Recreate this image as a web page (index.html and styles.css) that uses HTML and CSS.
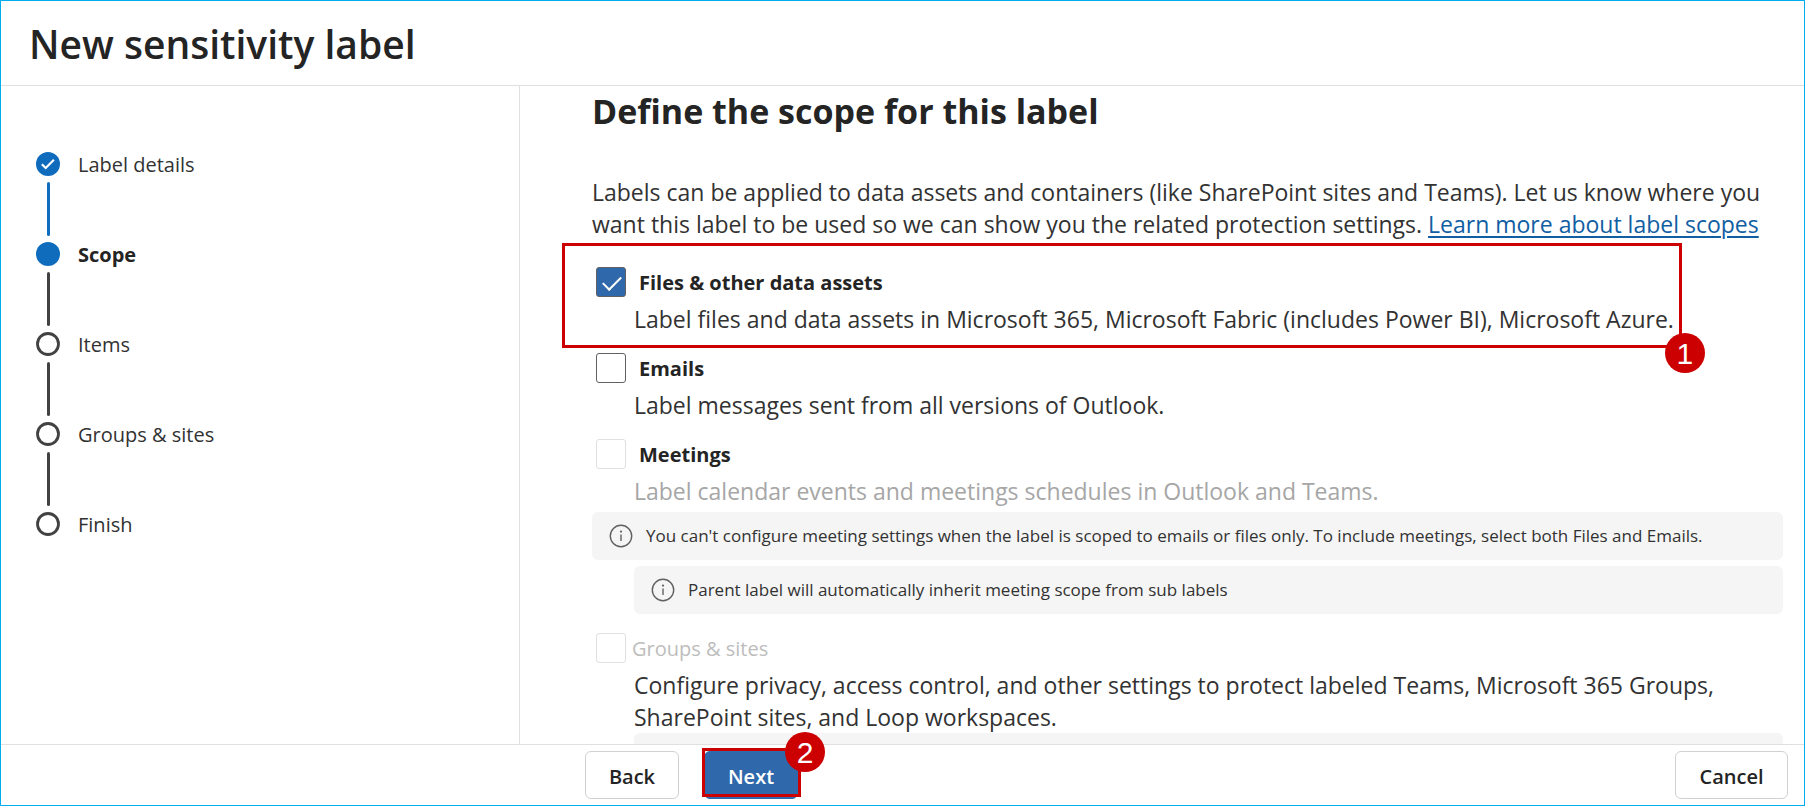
FILE: index.html
```html
<!DOCTYPE html>
<html lang="en">
<head>
<meta charset="utf-8">
<title>New sensitivity label</title>
<link rel="stylesheet" href="styles.css">
</head>
<body>
<div class="wizard">
  <header class="wizard-header">
    <h1 class="wizard-title">New sensitivity label</h1>
  </header>
  <div class="wizard-body">
    <nav class="sidebar" aria-label="Steps">
      <ol class="steps">
        <li class="step step-done">
          <svg class="step-icon" viewBox="0 0 24 24" aria-hidden="true"><circle cx="12" cy="12" r="12" fill="#0f6cbd"/><path d="M5.800 12.300l3.900 3.700 8.200-8.300" fill="none" stroke="#fff" stroke-width="2.200"/></svg>
          <span>Label details</span>
        </li>
        <li class="step step-current" aria-current="step">
          <svg class="step-icon" viewBox="0 0 24 24" aria-hidden="true"><circle cx="12" cy="12" r="12" fill="#0f6cbd"/></svg>
          <span>Scope</span>
        </li>
        <li class="step">
          <svg class="step-icon" viewBox="0 0 24 24" aria-hidden="true"><circle cx="12" cy="12" r="10.500" fill="none" stroke="#424242" stroke-width="2.800"/></svg>
          <span>Items</span>
        </li>
        <li class="step">
          <svg class="step-icon" viewBox="0 0 24 24" aria-hidden="true"><circle cx="12" cy="12" r="10.500" fill="none" stroke="#424242" stroke-width="2.800"/></svg>
          <span>Groups &amp; sites</span>
        </li>
        <li class="step">
          <svg class="step-icon" viewBox="0 0 24 24" aria-hidden="true"><circle cx="12" cy="12" r="10.500" fill="none" stroke="#424242" stroke-width="2.800"/></svg>
          <span>Finish</span>
        </li>
      </ol>
    </nav>
    <main class="content">
      <h2 class="content-title">Define the scope for this label</h2>
      <p class="intro">Labels can be applied to data assets and containers (like SharePoint sites and Teams). Let us know where you want this label to be used so we can show you the related protection settings. <a class="link" href="#scopes">Learn more about label scopes</a></p>

      <div class="option option-marked">
        <div class="option-head">
          <input class="check" type="checkbox" id="files" checked>
          <label class="option-label" for="files">Files &amp; other data assets</label>
        </div>
        <p class="option-text">Label files and data assets in Microsoft 365, Microsoft Fabric (includes Power BI), Microsoft Azure.</p>
        <div class="marker marker-option"><span class="badge badge-bottom">1</span></div>
      </div>

      <div class="option">
        <div class="option-head">
          <input class="check" type="checkbox" id="emails">
          <label class="option-label" for="emails">Emails</label>
        </div>
        <p class="option-text">Label messages sent from all versions of Outlook.</p>
      </div>

      <div class="option option-noted">
        <div class="option-head">
          <input class="check" type="checkbox" id="meetings" disabled>
          <label class="option-label" for="meetings">Meetings</label>
        </div>
        <p class="option-text option-text-muted">Label calendar events and meetings schedules in Outlook and Teams.</p>
      </div>
      <div class="notes">
        <div class="note">
          <svg class="note-icon" viewBox="0 0 24 24" aria-hidden="true"><circle cx="12" cy="12" r="10.700" fill="none" stroke="#616161" stroke-width="1.400"/><circle cx="12" cy="7.600" r="1.100" fill="#616161"/><path d="M12 10.500v6.500" stroke="#616161" stroke-width="1.400"/></svg>
          <span>You can't configure meeting settings when the label is scoped to emails or files only. To include meetings, select both Files and Emails.</span>
        </div>
        <div class="note note-nested">
          <svg class="note-icon" viewBox="0 0 24 24" aria-hidden="true"><circle cx="12" cy="12" r="10.700" fill="none" stroke="#616161" stroke-width="1.400"/><circle cx="12" cy="7.600" r="1.100" fill="#616161"/><path d="M12 10.500v6.500" stroke="#616161" stroke-width="1.400"/></svg>
          <span>Parent label will automatically inherit meeting scope from sub labels</span>
        </div>
      </div>

      <div class="option option-last">
        <div class="option-head option-head-disabled">
          <input class="check" type="checkbox" id="groups" disabled>
          <label class="option-label" for="groups">Groups &amp; sites</label>
        </div>
        <p class="option-text">Configure privacy, access control, and other settings to protect labeled Teams, Microsoft 365 Groups, SharePoint sites, and Loop workspaces.</p>
      </div>
      <div class="note note-nested"></div>
    </main>
  </div>
  <footer class="wizard-footer">
    <button class="button" type="button">Back</button>
    <div class="next">
      <button class="button button-primary" type="button">Next</button>
      <div class="marker marker-button"><span class="badge badge-top">2</span></div>
    </div>
    <button class="button button-cancel" type="button">Cancel</button>
  </footer>
</div>
</body>
</html>
```

FILE: styles.css
```css
* {
  box-sizing: border-box;
}

body {
  margin: 0;
  color: #242424;
  background: #fff;
  font-family: "Open Sans", "Noto Sans", sans-serif;
}

h1, h2, p, ol {
  margin: 0;
  padding: 0;
}

.wizard {
  display: flex;
  flex-direction: column;
  height: 100vh;
  border: 1px solid #00adef;
}

.wizard-header {
  padding: 15px 28px 13px;
  border-bottom: 1px solid #e0e0e0;
}

.wizard-title {
  font-size: 39px;
  font-weight: 600;
  line-height: 56px;
}

.wizard-body {
  display: flex;
  flex: 1;
  min-height: 0;
}

.sidebar {
  flex: none;
  width: 519px;
  padding: 66px 35px;
  border-right: 1px solid #e0e0e0;
}

.steps {
  list-style: none;
}

.step {
  display: grid;
  grid-template-columns: 24px 1fr;
  grid-template-rows: 24px;
  column-gap: 18px;
  row-gap: 6px;
  padding-bottom: 6px;
  color: #323232;
  font-size: 20px;
  line-height: 26px;
}

.step-icon {
  width: 24px;
  height: 24px;
}

.step::after {
  content: "";
  grid-column: 1;
  justify-self: center;
  width: 3px;
  height: 54px;
  border-radius: 2px;
  background: #424242;
}

.step:last-child::after {
  display: none;
}

.step-done::after {
  background: #0f6cbd;
}

.step-current {
  color: #242424;
  font-weight: 700;
}

.content {
  flex: 1;
  min-width: 0;
  padding: 1px 21px 0 72px;
  overflow: hidden;
}

.content-title {
  margin-bottom: 41px;
  font-size: 34px;
  font-weight: 700;
  line-height: 48px;
}

.intro,
.option-text {
  color: #323232;
  font-size: 23px;
  line-height: 32px;
}

.intro {
  margin-bottom: 27px;
}

.link {
  color: #115ea3;
  text-decoration-thickness: 2px;
  text-underline-offset: 3px;
}

.option {
  margin-bottom: 18px;
}

.option-marked {
  position: relative;
  width: fit-content;
}

.option-noted {
  margin-bottom: 5px;
}

.option-last {
  margin-bottom: 0;
}

.option-head {
  display: flex;
  align-items: center;
  gap: 13px;
  margin-bottom: 6px;
  padding-left: 4px;
}

.option-head-disabled {
  gap: 6px;
}

.option-label {
  padding-top: 2px;
  font-size: 20px;
  font-weight: 700;
  line-height: 28px;
}

.option-head-disabled .option-label {
  color: #bdbdbd;
  font-weight: 400;
}

.option-text {
  padding-left: 42px;
}

.option-text-muted {
  color: #a6a6a6;
}

.check {
  position: relative;
  flex: none;
  width: 30px;
  height: 30px;
  margin: 0;
  border: 1px solid #616161;
  border-radius: 3px;
  background: #fff;
  appearance: none;
}

.check:checked {
  background: #2f69ab;
}

.check:checked::after {
  content: "";
  position: absolute;
  top: 8px;
  left: 6px;
  width: 16px;
  height: 8px;
  border: solid #fff;
  border-width: 0 0 2px 2px;
  transform: rotate(-45deg);
}

.check:disabled {
  border-color: #e0e0e0;
}

.notes {
  display: flex;
  flex-direction: column;
  gap: 6px;
  margin-bottom: 19px;
}

.note {
  display: flex;
  align-items: center;
  gap: 13px;
  min-height: 48px;
  padding: 0 17px;
  border-radius: 6px;
  background: #f5f5f5;
  color: #323232;
  font-size: 17px;
  line-height: 24px;
}

.note-nested {
  margin-left: 42px;
}

.note-icon {
  flex: none;
  width: 24px;
  height: 24px;
}

.wizard-footer {
  display: flex;
  gap: 25px;
  padding: 6px 16px 6px 584px;
  border-top: 1px solid #e0e0e0;
}

.button {
  min-width: 94px;
  height: 48px;
  padding: 2px 12px 0;
  border: 1px solid #d1d1d1;
  border-radius: 6px;
  background: #fff;
  color: #242424;
  font-family: inherit;
  font-size: 20px;
  font-weight: 600;
}

.button-primary {
  border-color: #2f69ab;
  background: #2f69ab;
  color: #fff;
}

.button-cancel {
  min-width: 113px;
  margin-left: auto;
}

.next {
  position: relative;
}

.marker {
  position: absolute;
  border: 3px solid #c00;
  pointer-events: none;
}

.marker-option {
  inset: -24px -8px -13px -30px;
}

.marker-button {
  inset: -3px -3px 2px -2px;
}

.badge {
  position: absolute;
  width: 40px;
  height: 40px;
  border-radius: 50%;
  background: #c00;
  color: #fff;
  font-family: "Liberation Sans", Arial, sans-serif;
  font-size: 30px;
  line-height: 42px;
  text-align: center;
}

.badge-bottom {
  right: -26px;
  bottom: -28px;
}

.badge-top {
  top: -19px;
  right: -27px;
}
```
